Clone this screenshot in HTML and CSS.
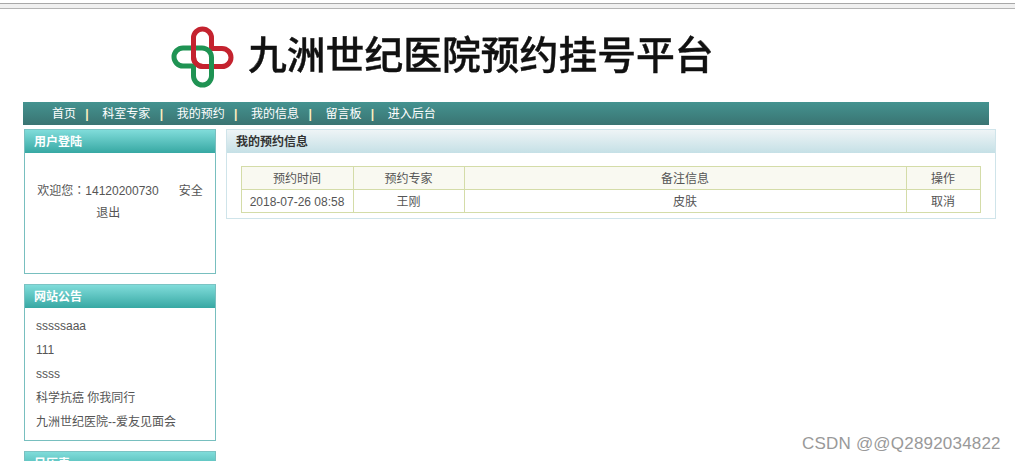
FILE: index.html
```html
<!DOCTYPE html>
<html lang="zh-CN">
<head>
<meta charset="utf-8">
<title>九洲世纪医院预约挂号平台</title>
<link rel="stylesheet" href="styles.css">
</head>
<body>
<div class="topstrip"></div>
<header class="banner">
  <svg class="logo" width="64" height="62" viewBox="170 26 64 62" aria-hidden="true">
    <path class="red" d="M193.5 38a9 9 0 0 1 18 0V48.500H222a9 9 0 0 1 0 18H203a9.500 9.500 0 0 1-9.500-9.500Z"/>
    <path class="green" d="M211.500 76a9 9 0 0 1-18 0V66H183a9 9 0 0 1 0-18H202a9.500 9.500 0 0 1 9.500 9.500Z"/>
    <path class="red" d="M193.500 44V57a9.500 9.500 0 0 0 9.500 9.500H207"/>
  </svg>
  <h1 class="brand">九洲世纪医院预约挂号平台</h1>
</header>
<nav class="nav">
  <a>首页</a><i>|</i><a>科室专家</a><i>|</i><a>我的预约</a><i>|</i><a>我的信息</a><i>|</i><a>留言板</a><i>|</i><a>进入后台</a>
</nav>
<div class="layout">
  <aside class="side">
    <section class="box">
      <h2>用户登陆</h2>
      <div class="login"><p>欢迎您<span class="colon" lang="zh-Hant">：</span>14120200730 &nbsp; &nbsp; &nbsp;安全退出&nbsp;&nbsp;&nbsp;&nbsp;&nbsp;&nbsp;&nbsp;</p></div>
    </section>
    <section class="box">
      <h2>网站公告</h2>
      <ul class="news">
        <li>sssssaaa</li>
        <li>111</li>
        <li>ssss</li>
        <li>科学抗癌 你我同行</li>
        <li>九洲世纪医院--爱友见面会</li>
      </ul>
    </section>
    <section class="box">
      <h2>日历表</h2>
    </section>
  </aside>
  <main class="panel">
    <h2>我的预约信息</h2>
    <div class="panel-body">
      <table>
        <thead>
          <tr><th class="c1">预约时间</th><th class="c2">预约专家</th><th>备注信息</th><th class="c4">操作</th></tr>
        </thead>
        <tbody>
          <tr><td>2018-07-26 08:58</td><td>王刚</td><td>皮肤</td><td>取消</td></tr>
        </tbody>
      </table>
    </div>
  </main>
</div>
<div class="mark">CSDN @@Q2892034822</div>
</body>
</html>
```
FILE: styles.css
```css
* { box-sizing: border-box; }
html, body { margin: 0; height: 461px; overflow: hidden; background: #fff; }
body {
  position: relative;
  font: 12px/24px "Liberation Sans", "Noto Sans CJK SC", sans-serif;
  color: #555;
}
.topstrip {
  height: 6px;
  margin-top: 3px;
  background: #f0f0f0;
  border-top: 1px solid #a8a8a8;
  border-bottom: 1px solid #b4b4b4;
}
.banner {
  display: flex;
  align-items: center;
  height: 93px;
  padding-left: 170px;
}
.logo { flex: none; margin-top: 3px; }
.red, .green { fill: none; stroke-width: 5; }
.red { stroke: #c4232f; }
.green { stroke: #1f9353; }
.brand {
  margin: 0 0 6px 14px;
  font: 500 38.800px/1 "Noto Sans CJK SC", sans-serif;
  -webkit-text-stroke: .4px #111;
  color: #111;
  white-space: nowrap;
  filter: blur(.35px);
}
.nav {
  display: flex;
  align-items: center;
  width: 966px;
  height: 23px;
  margin-left: 23px;
  padding: 1px 0 0 29px;
  background: linear-gradient(#449390, #3a7472);
  color: #fff;
}
.nav a { color: #fff; }
.nav i { margin: 0 13.700px 0 9.300px; font-style: normal; font-weight: 700; color: #ffefc0; }
.layout {
  display: flex;
  align-items: flex-start;
  gap: 10px;
  margin-top: 4px;
  padding-left: 24px;
}
.side { flex: none; width: 192px; }
.box {
  margin-bottom: 10px;
  border: 1px solid #78bfbf;
  border-top-color: #7cc4c4;
}
.box h2 {
  margin: 0;
  height: 23px;
  padding: 1px 0 0 9px;
  font-size: 12px;
  line-height: 23px;
  font-weight: 700;
  color: #fff;
  background: linear-gradient(#80dcda, #37a8a3);
}
.login {
  height: 120px;
  padding: 26px 12px 0;
  text-align: center;
}
.login p { margin: 0; line-height: 22px; }
.colon { font-family: "Noto Sans CJK TC", sans-serif; }
.news { margin: 0; padding: 6px 0 0 11px; height: 132px; list-style: none; }
.panel {
  width: 770px;
  border: 1px solid #cfe4ea;
}
.panel h2 {
  margin: 0;
  height: 23px;
  padding: 1px 0 0 9px;
  font-size: 12px;
  line-height: 23px;
  font-weight: 700;
  color: #333;
  background: linear-gradient(#eef4f6, #c5e0e6);
}
.panel-body { padding: 13px 14px 5px; }
table {
  width: 740px;
  border-collapse: collapse;
  table-layout: fixed;
  border: 1px solid #d4dca8;
}
th, td {
  height: 23px;
  padding: 2px 1px 0 0;
  border: 1px solid #d4dca8;
  text-align: center;
  font-weight: 400;
  line-height: 20px;
}
th { background: #f9f9f1; }
.c1 { width: 112px; }
.c2 { width: 111px; }
.c4 { width: 74px; }
.mark {
  position: absolute;
  left: 802px;
  top: 433px;
  font-size: 17px;
  line-height: 22px;
  letter-spacing: .2px;
  color: #999;
  white-space: nowrap;
}
```
